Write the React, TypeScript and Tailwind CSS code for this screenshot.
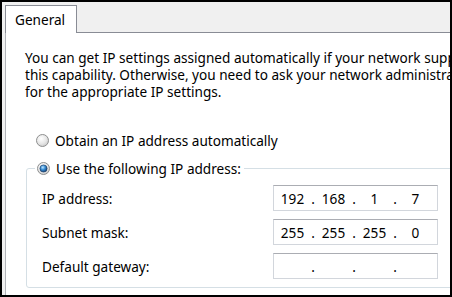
import React from "react";

function Radio({ checked, id }: { checked?: boolean; id: string }) {
  return (
    <svg width="13" height="13" viewBox="0 0 13 13" className="shrink-0">
      <defs>
        <radialGradient id={`bg-${id}`} cx="0.4" cy="0.35" r="0.7">
          <stop offset="0" stopColor="#ffffff" />
          <stop offset="0.6" stopColor="#e6e6e6" />
          <stop offset="1" stopColor="#c9c9c9" />
        </radialGradient>
        <radialGradient id={`dot-${id}`} cx="0.4" cy="0.35" r="0.7">
          <stop offset="0" stopColor="#bfe6ff" />
          <stop offset="0.45" stopColor="#3a8fd6" />
          <stop offset="1" stopColor="#0f3b6e" />
        </radialGradient>
      </defs>
      <circle cx="6.5" cy="6.5" r="6" fill={`url(#bg-${id})`} stroke="#8e8f8f" strokeWidth="1" />
      {checked && <circle cx="6.5" cy="6.5" r="3.6" fill={`url(#dot-${id})`} stroke="#14345c" strokeWidth="0.6" />}
    </svg>
  );
}

function IpBox({ parts }: { parts: string[] }) {
  return (
    <div className="w-[165px] h-[26px] border border-[#d2d6dc] border-t-[#abadb3] bg-white flex items-center">
      {parts.map((p, i) => (
        <React.Fragment key={i}>
          <span className="w-[37px] text-center">{p}</span>
          {i < 3 && <span className="w-[4px] text-center">.</span>}
        </React.Fragment>
      ))}
    </div>
  );
}

export default function App() {
  const rows: { label: string; parts: string[] }[] = [
    { label: "IP address:", parts: ["192", "168", "1", "7"] },
    { label: "Subnet mask:", parts: ["255", "255", "255", "0"] },
    { label: "Default gateway:", parts: ["", "", "", ""] },
  ];
  return (
    <div className="w-[452px] h-[297px] overflow-hidden border-2 border-black bg-[#f0f0f0] text-black text-[13.6px] leading-[17px] font-['Noto_Sans',sans-serif] flex flex-col">
      <div className="flex pt-[3px] pl-[3px] shrink-0">
        <div className="w-[72px] h-[28px] bg-white border border-b-0 border-[#898c95] flex items-center pl-[9px] pb-[1px]">
          General
        </div>
        <div className="flex-1 h-[28px] border-b border-[#898c95]" />
      </div>
      <div className="ml-[3px] flex-1 bg-white border-l border-[#b0b3b8] pl-[19px] pt-[16px] whitespace-nowrap overflow-hidden">
        <div>
          <div>You can get IP settings assigned automatically if your network supports</div>
          <div>this capability. Otherwise, you need to ask your network administrator</div>
          <div>for the appropriate IP settings.</div>
        </div>
        <div className="mt-[32px] ml-[11px] flex items-center gap-[6px]">
          <Radio id="a" />
          <span>Obtain an IP address automatically</span>
        </div>
        <fieldset className="mt-[11px] ml-[1px] w-[440px] border border-[#d5dfe5] rounded-[3px] pb-[8px]">
          <legend className="ml-[8px] px-[2px] pr-[3px]">
            <span className="flex items-center gap-[6px]">
              <Radio id="b" checked />
              <span>Use the following IP address:</span>
            </span>
          </legend>
          <div className="mt-[8px] flex flex-col gap-[8px] pl-[15px]">
            {rows.map((r) => (
              <div key={r.label} className="flex items-center">
                <span className="w-[231px]">{r.label}</span>
                <IpBox parts={r.parts} />
              </div>
            ))}
          </div>
        </fieldset>
      </div>
    </div>
  );
}
